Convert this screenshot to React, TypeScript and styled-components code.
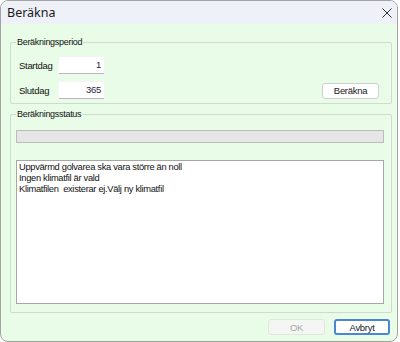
import React from "react";
import styled, { createGlobalStyle } from "styled-components";

const GlobalStyle = createGlobalStyle`
  html, body {
    margin: 0;
    padding: 0;
    background: #ffffff;
  }
  * {
    box-sizing: border-box;
  }
`;

const Window = styled.div`
  width: 398px;
  height: 342px;
  border: 1px solid #a3a3a3;
  border-radius: 8px;
  overflow: hidden;
  display: flex;
  flex-direction: column;
  background: #e8fce8;
  font-family: "Liberation Sans", Arial, sans-serif;
  font-size: 9px;
  letter-spacing: -0.3px;
  color: #111;
`;

const TitleBar = styled.div`
  height: 23px;
  flex: none;
  display: flex;
  align-items: center;
  justify-content: space-between;
  padding: 0 5px 0 6px;
  background: #eff1f9;
`;

const Title = styled.span`
  font-family: "Noto Sans", "Open Sans", sans-serif;
  font-size: 12.5px;
  letter-spacing: 0;
  color: #1a1a1a;
`;

const CloseButton = styled.div`
  width: 11px;
  height: 11px;
  display: flex;
  align-items: center;
  justify-content: center;
`;

const Body = styled.div`
  flex: 1;
  display: flex;
  flex-direction: column;
  padding: 18px 5px 0 9px;
`;

const Group = styled.div<{ $grow?: boolean }>`
  border: 1px solid #d0dbd0;
  border-radius: 2px;
  display: flex;
  flex-direction: column;
  flex: ${(p) => (p.$grow ? 1 : "none")};
  margin-top: ${(p) => (p.$grow ? "10px" : "0")};
`;

const Legend = styled.div`
  margin: -6px 0 0 5px;
  height: 11px;
  line-height: 11px;
  width: fit-content;
  padding: 0 1px;
  background: #e8fce8;
`;

const PeriodBody = styled.div`
  display: flex;
  flex-direction: column;
  gap: 8px;
  padding: 9px 12px 4px 8px;
`;

const Row = styled.div`
  display: flex;
  align-items: center;
`;

const Label = styled.span`
  width: 40px;
  font-size: 9.5px;
`;

const NumberField = styled.div`
  width: 45px;
  height: 17px;
  background: #ffffff;
  border-bottom: 1px solid #b8b8b8;
  box-shadow: 0 0 0 1px #f4f4f4;
  text-align: right;
  padding: 0 3px;
  line-height: 16px;
  font-size: 9.5px;
  color: #2a2440;
`;

const Spacer = styled.div`
  flex: 1;
`;

const Button = styled.div<{ $disabled?: boolean; $focused?: boolean }>`
  width: ${(p) => (p.$focused ? 56 : 57)}px;
  height: 16px;
  display: flex;
  align-items: center;
  justify-content: center;
  background: ${(p) => (p.$disabled ? "#f3f6f3" : "#ffffff")};
  border: ${(p) =>
    p.$focused ? "2px solid #4a86d4" : p.$disabled ? "1px solid #e0e6e0" : "1px solid #cfcfcf"};
  border-radius: 3px;
  color: ${(p) => (p.$disabled ? "#a8a8a8" : "#1a1a1a")};
  font-size: 9.5px;
`;

const StatusBody = styled.div`
  flex: 1;
  display: flex;
  flex-direction: column;
  padding: 10px 7px 8px 5px;
`;

const Progress = styled.div`
  height: 13px;
  background: #e6e6e6;
  border: 1px solid #bcbcbc;
`;

const MessageBox = styled.div`
  flex: 1;
  margin-top: 17px;
  background: #ffffff;
  border: 1px solid #a6a6a6;
  padding: 1px 2px;
  line-height: 10.8px;
  font-size: 9.3px;
  white-space: pre;
`;

const Footer = styled.div`
  display: flex;
  justify-content: flex-end;
  gap: 9px;
  padding: 6px 2px 6px 0;
`;

const messages = [
  "Uppvärmd golvarea ska vara större än noll",
  "Ingen klimatfil är vald",
  "Klimatfilen  existerar ej.Välj ny klimatfil",
];

export default function App() {
  return (
    <>
      <GlobalStyle />
      <Window>
        <TitleBar>
          <Title>Beräkna</Title>
          <CloseButton>
            <svg width="10" height="10" viewBox="0 0 10 10">
              <path d="M0.5 0.5 L9.5 9.5 M9.5 0.5 L0.5 9.5" stroke="#333" strokeWidth="1" />
            </svg>
          </CloseButton>
        </TitleBar>
        <Body>
          <Group>
            <Legend>Beräkningsperiod</Legend>
            <PeriodBody>
              <Row>
                <Label>Startdag</Label>
                <NumberField>1</NumberField>
              </Row>
              <Row>
                <Label>Slutdag</Label>
                <NumberField>365</NumberField>
                <Spacer />
                <Button>Beräkna</Button>
              </Row>
            </PeriodBody>
          </Group>
          <Group $grow>
            <Legend>Beräkningsstatus</Legend>
            <StatusBody>
              <Progress />
              <MessageBox>
                {messages.map((m) => (
                  <div key={m}>{m}</div>
                ))}
              </MessageBox>
            </StatusBody>
          </Group>
          <Footer>
            <Button $disabled>OK</Button>
            <Button $focused>Avbryt</Button>
          </Footer>
        </Body>
      </Window>
    </>
  );
}
